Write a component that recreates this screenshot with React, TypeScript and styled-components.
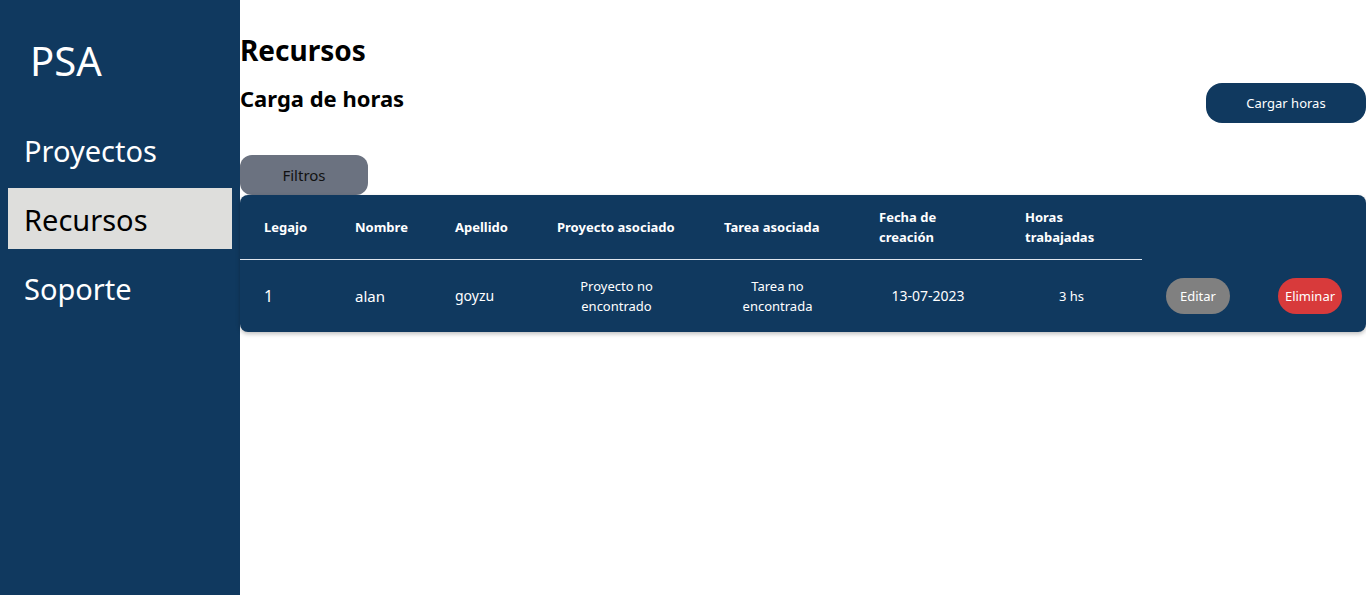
import styled, { createGlobalStyle } from "styled-components";

const navy = "#10395f";

const GlobalStyle = createGlobalStyle`
  html, body {
    margin: 0;
    padding: 0;
    background: #ffffff;
    font-family: "Noto Sans", "Open Sans", sans-serif;
  }
  * { box-sizing: border-box; }
`;

type Registro = {
  legajo: number;
  nombre: string;
  apellido: string;
  proyecto: string;
  tarea: string;
  fecha: string;
  horas: string;
};

const registros: Registro[] = [
  {
    legajo: 1,
    nombre: "alan",
    apellido: "goyzu",
    proyecto: "Proyecto no encontrado",
    tarea: "Tarea no encontrada",
    fecha: "13-07-2023",
    horas: "3 hs",
  },
];

const navItems = ["Proyectos", "Recursos", "Soporte"];

export default function App() {
  return (
    <>
      <GlobalStyle />
      <Layout>
        <Sidebar>
          <Logo>PSA</Logo>
          <Nav>
            {navItems.map((item) => (
              <NavItem key={item} $active={item === "Recursos"}>
                {item}
              </NavItem>
            ))}
          </Nav>
        </Sidebar>
        <Main>
          <Title>Recursos</Title>
          <TitleRow>
            <Subtitle>Carga de horas</Subtitle>
            <PrimaryButton>Cargar horas</PrimaryButton>
          </TitleRow>
          <FilterButton>Filtros</FilterButton>
          <Table>
            <HeadRow>
              <HeadCell>Legajo</HeadCell>
              <HeadCell>Nombre</HeadCell>
              <HeadCell>Apellido</HeadCell>
              <HeadCell>Proyecto asociado</HeadCell>
              <HeadCell>Tarea asociada</HeadCell>
              <HeadCell>Fecha de<br />creación</HeadCell>
              <HeadCell>Horas<br />trabajadas</HeadCell>
              <HeadSpacer />
              <HeadSpacer />
            </HeadRow>
            {registros.map((r) => (
              <BodyRow key={r.legajo}>
                <Cell $size={16}>{r.legajo}</Cell>
                <Cell $size={15}>{r.nombre}</Cell>
                <Cell $size={14}>{r.apellido}</Cell>
                <Cell $center>Proyecto no<br />encontrado</Cell>
                <Cell $center>Tarea no<br />encontrada</Cell>
                <Cell $center $size={14}>{r.fecha}</Cell>
                <Cell $center>{r.horas}</Cell>
                <Cell>
                  <RowButton $color="#808080">Editar</RowButton>
                </Cell>
                <Cell>
                  <RowButton $color="#d83a3b">Eliminar</RowButton>
                </Cell>
              </BodyRow>
            ))}
          </Table>
        </Main>
      </Layout>
    </>
  );
}

const Layout = styled.div`
  display: flex;
  min-height: 595px;
`;

const Sidebar = styled.aside`
  width: 240px;
  flex-shrink: 0;
  background: ${navy};
  color: #ffffff;
  padding-top: 36px;
`;

const Logo = styled.div`
  font-size: 40px;
  line-height: 50px;
  padding-left: 30px;
  margin-bottom: 33px;
`;

const Nav = styled.nav`
  display: flex;
  flex-direction: column;
  gap: 8px;
`;

const NavItem = styled.div<{ $active?: boolean }>`
  margin: 0 8px;
  height: 61px;
  display: flex;
  align-items: center;
  padding: 2px 0 0 16px;
  font-size: 29px;
  background: ${(p) => (p.$active ? "#dededc" : "transparent")};
  color: ${(p) => (p.$active ? "#000000" : "#ffffff")};
  cursor: pointer;
`;

const Main = styled.main`
  flex: 1;
  display: flex;
  flex-direction: column;
  padding-top: 30px;
`;

const Title = styled.h1`
  margin: 0;
  font-size: 28px;
  line-height: 40px;
  font-weight: 700;
`;

const TitleRow = styled.div`
  display: flex;
  align-items: center;
  justify-content: space-between;
  margin-top: 13px;
`;

const Subtitle = styled.h2`
  margin: 0;
  font-size: 22px;
  line-height: 30px;
  font-weight: 700;
  align-self: flex-start;
`;

const PrimaryButton = styled.button`
  width: 160px;
  height: 40px;
  border: none;
  border-radius: 16px;
  background: ${navy};
  color: #ffffff;
  font-family: inherit;
  font-size: 13px;
`;

const FilterButton = styled.button`
  width: 128px;
  height: 40px;
  margin-top: 32px;
  border: none;
  border-radius: 12px;
  background: #6b7280;
  color: #111111;
  font-family: inherit;
  font-size: 15px;
`;

const Table = styled.div`
  background: ${navy};
  border-radius: 8px;
  box-shadow: 0 2px 4px rgba(0, 0, 0, 0.25);
  color: #ffffff;
`;

const columns = "91px 100px 102px 167px 155px 146px 141px 112px 112px";

const HeadRow = styled.div`
  display: grid;
  grid-template-columns: ${columns};
  height: 65px;
`;

const HeadCell = styled.div`
  display: flex;
  align-items: center;
  padding: 0 24px;
  font-size: 13px;
  line-height: 20px;
  font-weight: 700;
  border-bottom: 1px solid #dfe6ee;
`;

const HeadSpacer = styled.div``;

const BodyRow = styled.div`
  display: grid;
  grid-template-columns: ${columns};
  height: 72px;
`;

const Cell = styled.div<{ $center?: boolean; $size?: number }>`
  display: flex;
  align-items: center;
  justify-content: ${(p) => (p.$center ? "center" : "flex-start")};
  text-align: ${(p) => (p.$center ? "center" : "left")};
  padding: 0 24px;
  font-size: ${(p) => p.$size ?? 13}px;
  line-height: 20px;
`;

const RowButton = styled.button<{ $color: string }>`
  width: 64px;
  height: 36px;
  border: none;
  border-radius: 18px;
  background: ${(p) => p.$color};
  color: #ffffff;
  font-family: inherit;
  font-size: 13px;
  padding: 0;
`;
